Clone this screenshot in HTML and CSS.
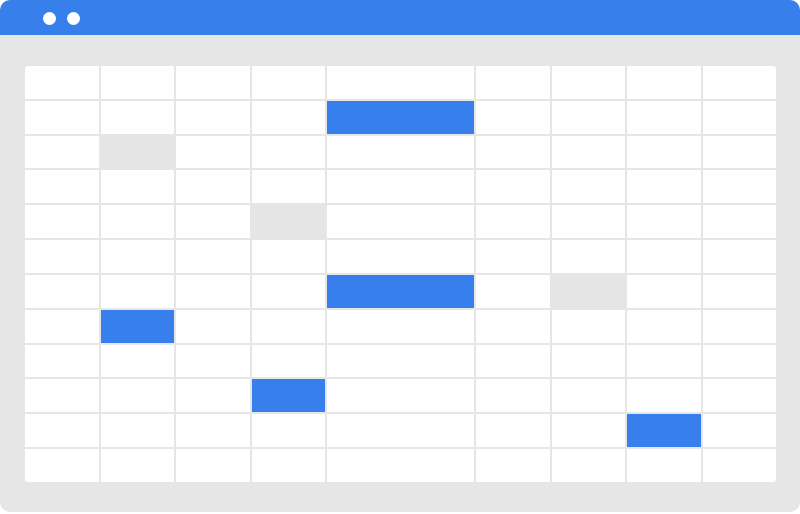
FILE: index.html
```html
<!DOCTYPE html>
<html>
<head>
<meta charset="utf-8">
<link rel="stylesheet" href="styles.css">
</head>
<body>
<div class="window">
  <div class="titlebar">
    <span class="dot"></span>
    <span class="dot"></span>
  </div>
  <div class="content">
    <div class="sheet">
      <div></div><div></div><div></div><div></div><div></div><div></div><div></div><div></div><div></div>
      <div></div><div></div><div></div><div></div><div class="blue"></div><div></div><div></div><div></div><div></div>
      <div></div><div class="gray"></div><div></div><div></div><div></div><div></div><div></div><div></div><div></div>
      <div></div><div></div><div></div><div></div><div></div><div></div><div></div><div></div><div></div>
      <div></div><div></div><div></div><div class="gray"></div><div></div><div></div><div></div><div></div><div></div>
      <div></div><div></div><div></div><div></div><div></div><div></div><div></div><div></div><div></div>
      <div></div><div></div><div></div><div></div><div class="blue"></div><div></div><div class="gray"></div><div></div><div></div>
      <div></div><div class="blue"></div><div></div><div></div><div></div><div></div><div></div><div></div><div></div>
      <div></div><div></div><div></div><div></div><div></div><div></div><div></div><div></div><div></div>
      <div></div><div></div><div></div><div class="blue"></div><div></div><div></div><div></div><div></div><div></div>
      <div></div><div></div><div></div><div></div><div></div><div></div><div></div><div class="blue"></div><div></div>
      <div></div><div></div><div></div><div></div><div></div><div></div><div></div><div></div><div></div>
    </div>
  </div>
</div>
</body>
</html>
```
FILE: styles.css
```css
html, body {
  margin: 0;
  padding: 0;
  background: #ffffff;
}
.window {
  width: 800px;
  height: 512px;
  border-radius: 10px;
  overflow: hidden;
  display: flex;
  flex-direction: column;
  background: #e6e6e6;
}
.titlebar {
  height: 35px;
  flex: none;
  background: #3780eb;
  display: flex;
  align-items: center;
  gap: 11px;
  padding-left: 43px;
  padding-top: 1px;
  box-sizing: border-box;
}
.dot {
  width: 13px;
  height: 13px;
  border-radius: 50%;
  background: #ffffff;
}
.content {
  flex: 1;
  padding: 31px 24px 30px 25px;
  display: flex;
}
.sheet {
  flex: 1;
  display: grid;
  grid-template-columns: 1fr 1fr 1fr 1fr 2fr 1fr 1fr 1fr 1fr;
  grid-template-rows: repeat(12, 1fr);
  gap: 2px;
  background: #e6e6e6;
  border-radius: 3px;
  overflow: hidden;
}
.sheet > div {
  background: #ffffff;
}
.sheet > div.blue {
  background: #377fec;
}
.sheet > div.gray {
  background: #e5e5e5;
}
```
